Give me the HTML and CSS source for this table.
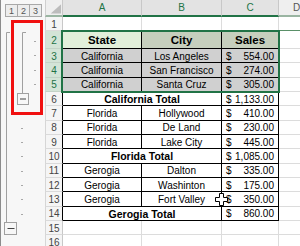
FILE: index.html
```html
<!DOCTYPE html>
<html>
<head>
<meta charset="utf-8">
<link rel="stylesheet" href="styles.css">
</head>
<body>
<div class="frame">
  <div class="outline">
    <div class="levels"><span>1</span><span>2</span><span>3</span></div>
    <svg class="bars" viewBox="1 17 44 229" width="44" height="229">
      <g stroke="#a0a0a0" fill="none" stroke-width="1">
        <path d="M6.5 222V32.5H10"/>
        <path d="M22.5 93V32.5H26"/>
        <rect x="17.5" y="93.5" width="11" height="11" fill="#f7f7f7"/>
        <rect x="4.5" y="222.5" width="12" height="12" fill="#f7f7f7"/>
      </g>
      <g stroke="#444" stroke-width="1">
        <path d="M20 99h6"/>
        <path d="M7.5 228.5h7"/>
      </g>
      <g fill="#a8a8a8">
        <rect x="34" y="41" width="2" height="1"/>
        <rect x="34" y="55" width="2" height="1"/>
        <rect x="34" y="70" width="2" height="1"/>
        <rect x="34" y="84" width="2" height="1"/>
        <rect x="21" y="113" width="2" height="1"/>
        <rect x="21" y="128" width="2" height="1"/>
        <rect x="21" y="142" width="2" height="1"/>
        <rect x="21" y="156" width="2" height="1"/>
        <rect x="21" y="171" width="2" height="1"/>
        <rect x="21" y="185" width="2" height="1"/>
        <rect x="21" y="199" width="2" height="1"/>
        <rect x="21" y="214" width="2" height="1"/>
      </g>
      <rect x="12.5" y="21.5" width="29" height="92" fill="none" stroke="#f01010" stroke-width="3"/>
    </svg>
  </div>
  <div class="sheet">
    <div class="corner"><svg width="17" height="15" viewBox="0 0 17 15"><path d="M5 14H16V4Z" fill="#bcbcbc"/></svg></div>
    <div class="ch sel">A</div><div class="ch sel">B</div><div class="ch sel">C</div><div class="ch">D</div>

    <div class="rh">1</div><div class="c top"></div><div class="c top"></div><div class="c top"></div><div class="c top"></div>

    <div class="rh sel t">2</div>
    <div class="c t hd act">State</div><div class="c t hd">City</div><div class="c t hd">Sales</div><div class="c"></div>

    <div class="rh sel t">3</div>
    <div class="c t s">California</div><div class="c t s">Los Angeles</div><div class="c t s m"><span>$</span><span>554.00</span></div><div class="c"></div>
    <div class="rh sel t">4</div>
    <div class="c t s">California</div><div class="c t s">San Francisco</div><div class="c t s m"><span>$</span><span>274.00</span></div><div class="c"></div>
    <div class="rh sel t">5</div>
    <div class="c t s">California</div><div class="c t s">Santa Cruz</div><div class="c t s m"><span>$</span><span>305.00</span></div><div class="c"></div>
    <div class="rh t">6</div>
    <div class="c t tot">California Total</div><div class="c t m"><span>$</span><span>1,133.00</span></div><div class="c"></div>

    <div class="rh t">7</div>
    <div class="c t">Florida</div><div class="c t">Hollywood</div><div class="c t m"><span>$</span><span>410.00</span></div><div class="c"></div>
    <div class="rh t">8</div>
    <div class="c t">Florida</div><div class="c t">De Land</div><div class="c t m"><span>$</span><span>230.00</span></div><div class="c"></div>
    <div class="rh t">9</div>
    <div class="c t">Florida</div><div class="c t">Lake City</div><div class="c t m"><span>$</span><span>445.00</span></div><div class="c"></div>
    <div class="rh t">10</div>
    <div class="c t tot">Florida Total</div><div class="c t m"><span>$</span><span>1,085.00</span></div><div class="c"></div>

    <div class="rh t">11</div>
    <div class="c t">Gerogia</div><div class="c t">Dalton</div><div class="c t m"><span>$</span><span>335.00</span></div><div class="c"></div>
    <div class="rh t">12</div>
    <div class="c t">Gerogia</div><div class="c t">Washinton</div><div class="c t m"><span>$</span><span>175.00</span></div><div class="c"></div>
    <div class="rh t">13</div>
    <div class="c t">Gerogia</div><div class="c t">Fort Valley</div><div class="c t m"><span>$</span><span>350.00</span></div><div class="c"></div>
    <div class="rh t">14</div>
    <div class="c t tot">Gerogia Total</div><div class="c t m"><span>$</span><span>860.00</span></div><div class="c"></div>

    <div class="rh">15</div><div class="c"></div><div class="c"></div><div class="c"></div><div class="c"></div>
    <div class="rh">16</div><div class="c"></div><div class="c"></div><div class="c"></div><div class="c"></div>

    <div class="selbox"></div>
    <svg class="cursor" width="13" height="13" viewBox="0 0 13 13"><path d="M4.5 0.5h4v4h4v4h-4v4h-4v-4h-4v-4h4z" fill="#fff" stroke="#000" stroke-width="1"/></svg>
  </div>
</div>
</body>
</html>
```

FILE: styles.css
```css
* { box-sizing: border-box; margin: 0; padding: 0; }
html, body { width: 300px; height: 246px; overflow: hidden; background: #fff; }
body { font-family: "Liberation Sans", Arial, sans-serif; color: #000; }

.frame { display: flex; height: 246px; border-left: 1px solid #8c8c8c; }

.outline { width: 44px; flex: none; background: #f7f7f7; display: flex; flex-direction: column; }
.levels { height: 17px; display: flex; padding: 4px 0 0 4px; }
.levels span { width: 13px; height: 13px; border: 1px solid #a8a8a8; margin-right: -1px; font-size: 9px; color: #555; display: flex; align-items: center; justify-content: center; background: #ededed; }
.bars { display: block; }

.sheet { position: relative; flex: 1; min-width: 0; overflow: hidden; display: grid; grid-template-columns: 18px 79px 80px 57px 36px; grid-template-rows: 17px 14px 18px repeat(14, 14.33px); font-size: 10px; }

.corner { background: #efefef; border-left: 1px solid #d0d0d0; border-right: 1px solid #c8c8c8; border-bottom: 2px solid #9ab5a2; display: flex; align-items: flex-end; justify-content: flex-end; }
.corner svg { display: block; }
.ch { background: #efefef; border-right: 1px solid #c8c8c8; border-bottom: 2px solid #9ab5a2; display: flex; align-items: center; justify-content: center; font-size: 10px; color: #555; }
.ch.sel { color: #217346; background: #e3e3e3; border-bottom-color: #217346; }

.rh { background: #f5f5f5; border-left: 1px solid #d6d6d6; border-right: 1px solid #c8c8c8; border-bottom: 1px solid #dadada; display: flex; align-items: center; justify-content: center; font-size: 10px; color: #444; padding-top: 1px; }
.rh.sel { background: #d3e4d7; color: #217346; border-bottom-color: #c3d3c7; }
.rh.t { border-right-color: #000; }

.c { border-right: 1px solid #dcdcdc; border-bottom: 1px solid #dcdcdc; display: flex; align-items: center; justify-content: center; white-space: nowrap; overflow: hidden; padding-top: 1px; }
.c.top { border-bottom: 1px solid #5a9068; }
.c.t { border-color: #000; }
.c.hd { font-weight: bold; font-size: 11.5px; background: #c6cfbd; }
.c.hd.act { background: #e2efda; }
.c.s { background: #d0d0d0; }
.c.tot { grid-column: span 2; font-weight: bold; font-size: 10.5px; }
.c.m { justify-content: space-between; padding: 1px 4px 0 4px; }

.selbox { position: absolute; grid-column: 2 / 5; grid-row: 3 / 7; top: -1px; bottom: -1px; left: -2px; right: -1px; border: 2px solid #217346; pointer-events: none; }

.cursor { position: absolute; left: 170px; top: 193px; }
```
